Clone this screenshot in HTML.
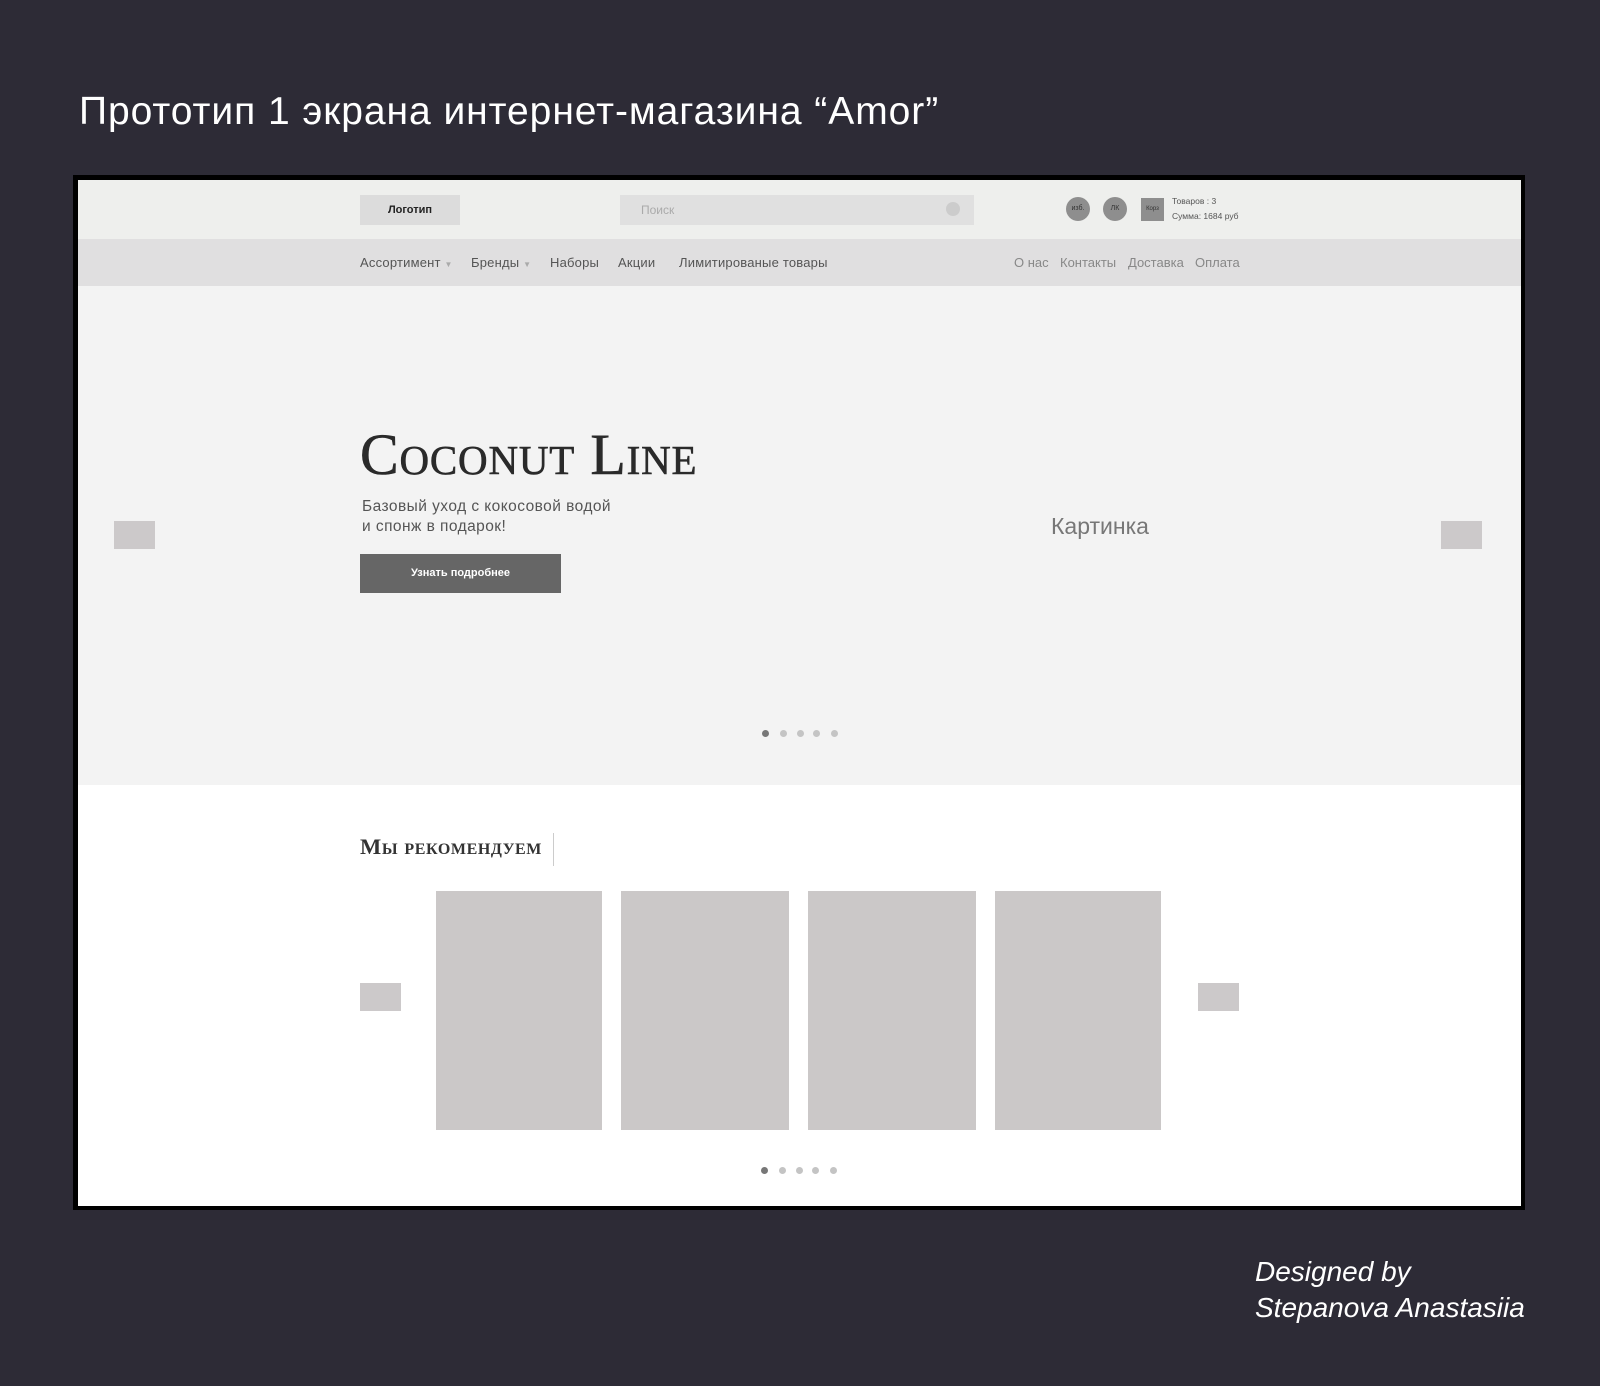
<!DOCTYPE html>
<html><head><meta charset="utf-8"><style>
*{margin:0;padding:0;box-sizing:border-box}
body{width:1600px;height:1386px;background:#2d2b36;position:relative;overflow:hidden;font-family:"Liberation Sans","DejaVu Sans",sans-serif}
.a{position:absolute}
.t{white-space:nowrap}
.title{left:79px;top:90px;font-size:39px;color:#fff;font-weight:300;letter-spacing:0.95px}
.frame{left:73px;top:175px;width:1452px;height:1035px;background:#000}
.in{left:78px;top:180px;width:1443px;height:1026px;background:#fff}
.nav{font-size:13px;color:#555;top:255px;letter-spacing:0.2px}
.navr{font-size:13px;color:#888;top:255px}
.dot{width:7px;height:7px;border-radius:50%;background:#c4c4c4}
.card{background:#cbc8c8;top:891px;height:239px}
.arr{background:#ccc9ca;width:41px;height:28px}
</style></head><body>
<div class="a t title">Прототип 1 экрана интернет-магазина “Amor”</div>
<div class="a frame"></div>
<div class="a in"></div>
<div class="a" style="left:78px;top:180px;width:1443px;height:59px;background:#eeefed"></div>
<div class="a" style="left:78px;top:239px;width:1443px;height:47px;background:#e0dfe0"></div>
<div class="a" style="left:78px;top:286px;width:1443px;height:499px;background:#f3f3f3"></div>

<div class="a t" style="left:360px;top:195px;width:100px;height:30px;background:#dcdcdc;font-size:11px;font-weight:bold;color:#222;text-align:center;line-height:30px">Логотип</div>
<div class="a t" style="left:620px;top:195px;width:354px;height:30px;background:#e0e0e0;font-size:12px;color:#aaa;line-height:30px;padding-left:21px">Поиск</div>
<div class="a" style="left:946px;top:202px;width:14px;height:14px;border-radius:50%;background:#ccc"></div>
<div class="a t" style="left:1066px;top:197px;width:24px;height:24px;border-radius:50%;background:#8e8e8e;font-size:7px;color:#333;text-align:center;line-height:24px">изб.</div>
<div class="a t" style="left:1103px;top:197px;width:24px;height:24px;border-radius:50%;background:#8e8e8e;font-size:7px;color:#333;text-align:center;line-height:24px">ЛК</div>
<div class="a t" style="left:1141px;top:198px;width:23px;height:23px;background:#8e8e8e;font-size:6px;color:#333;text-align:center;line-height:23px">Корз</div>
<div class="a t" style="left:1172px;top:196px;font-size:8.5px;color:#555">Товаров : 3</div>
<div class="a t" style="left:1172px;top:211px;font-size:8.5px;color:#555">Сумма: 1684 руб</div>

<div class="a t nav" style="left:360px">Ассортимент <span style="color:#aaa;font-size:8px">▼</span></div>
<div class="a t nav" style="left:471px">Бренды <span style="color:#aaa;font-size:8px">▼</span></div>
<div class="a t nav" style="left:550px">Наборы</div>
<div class="a t nav" style="left:618px">Акции</div>
<div class="a t nav" style="left:679px">Лимитированые товары</div>
<div class="a t navr" style="left:1014px">О нас</div>
<div class="a t navr" style="left:1060px">Контакты</div>
<div class="a t navr" style="left:1128px">Доставка</div>
<div class="a t navr" style="left:1195px">Оплата</div>

<div class="a t" style="left:360px;top:421px;font-family:'Liberation Serif',serif;font-size:58px;font-variant:small-caps;color:#2a2a2a;letter-spacing:0.8px;-webkit-text-stroke:0.6px #2a2a2a">Coconut Line</div>
<div class="a t" style="left:362px;top:497px;font-size:15.5px;color:#555;line-height:20px;letter-spacing:0.45px">Базовый уход с кокосовой водой<br>и спонж в подарок!</div>
<div class="a t" style="left:360px;top:554px;width:201px;height:39px;background:#666;color:#fff;font-size:11px;font-weight:bold;text-align:center;line-height:39px">Узнать подробнее</div>
<div class="a arr" style="left:114px;top:521px"></div>
<div class="a arr" style="left:1441px;top:521px"></div>
<div class="a t" style="left:1020px;top:513px;width:160px;text-align:center;font-size:23px;color:#777">Картинка</div>
<div class="a dot" style="left:762px;top:730px;background:#777"></div>
<div class="a dot" style="left:780px;top:730px"></div>
<div class="a dot" style="left:797px;top:730px"></div>
<div class="a dot" style="left:813px;top:730px"></div>
<div class="a dot" style="left:831px;top:730px"></div>

<div class="a t" style="left:360px;top:834px;font-family:'Liberation Serif',serif;font-size:22.5px;font-weight:bold;font-variant:small-caps;color:#333;letter-spacing:0.6px">Мы рекомендуем</div>
<div class="a" style="left:553px;top:833px;width:1px;height:33px;background:#ccc"></div>
<div class="a card" style="left:436px;width:166px"></div>
<div class="a card" style="left:621px;width:168px"></div>
<div class="a card" style="left:808px;width:168px"></div>
<div class="a card" style="left:995px;width:166px"></div>
<div class="a arr" style="left:360px;top:983px"></div>
<div class="a arr" style="left:1198px;top:983px"></div>
<div class="a dot" style="left:761px;top:1167px;background:#777"></div>
<div class="a dot" style="left:779px;top:1167px"></div>
<div class="a dot" style="left:796px;top:1167px"></div>
<div class="a dot" style="left:812px;top:1167px"></div>
<div class="a dot" style="left:830px;top:1167px"></div>

<div class="a t" style="left:1255px;top:1254px;font-size:28px;font-style:italic;color:#fff;line-height:36px;font-weight:300">Designed by<br>Stepanova Anastasiia</div>
</body></html>
